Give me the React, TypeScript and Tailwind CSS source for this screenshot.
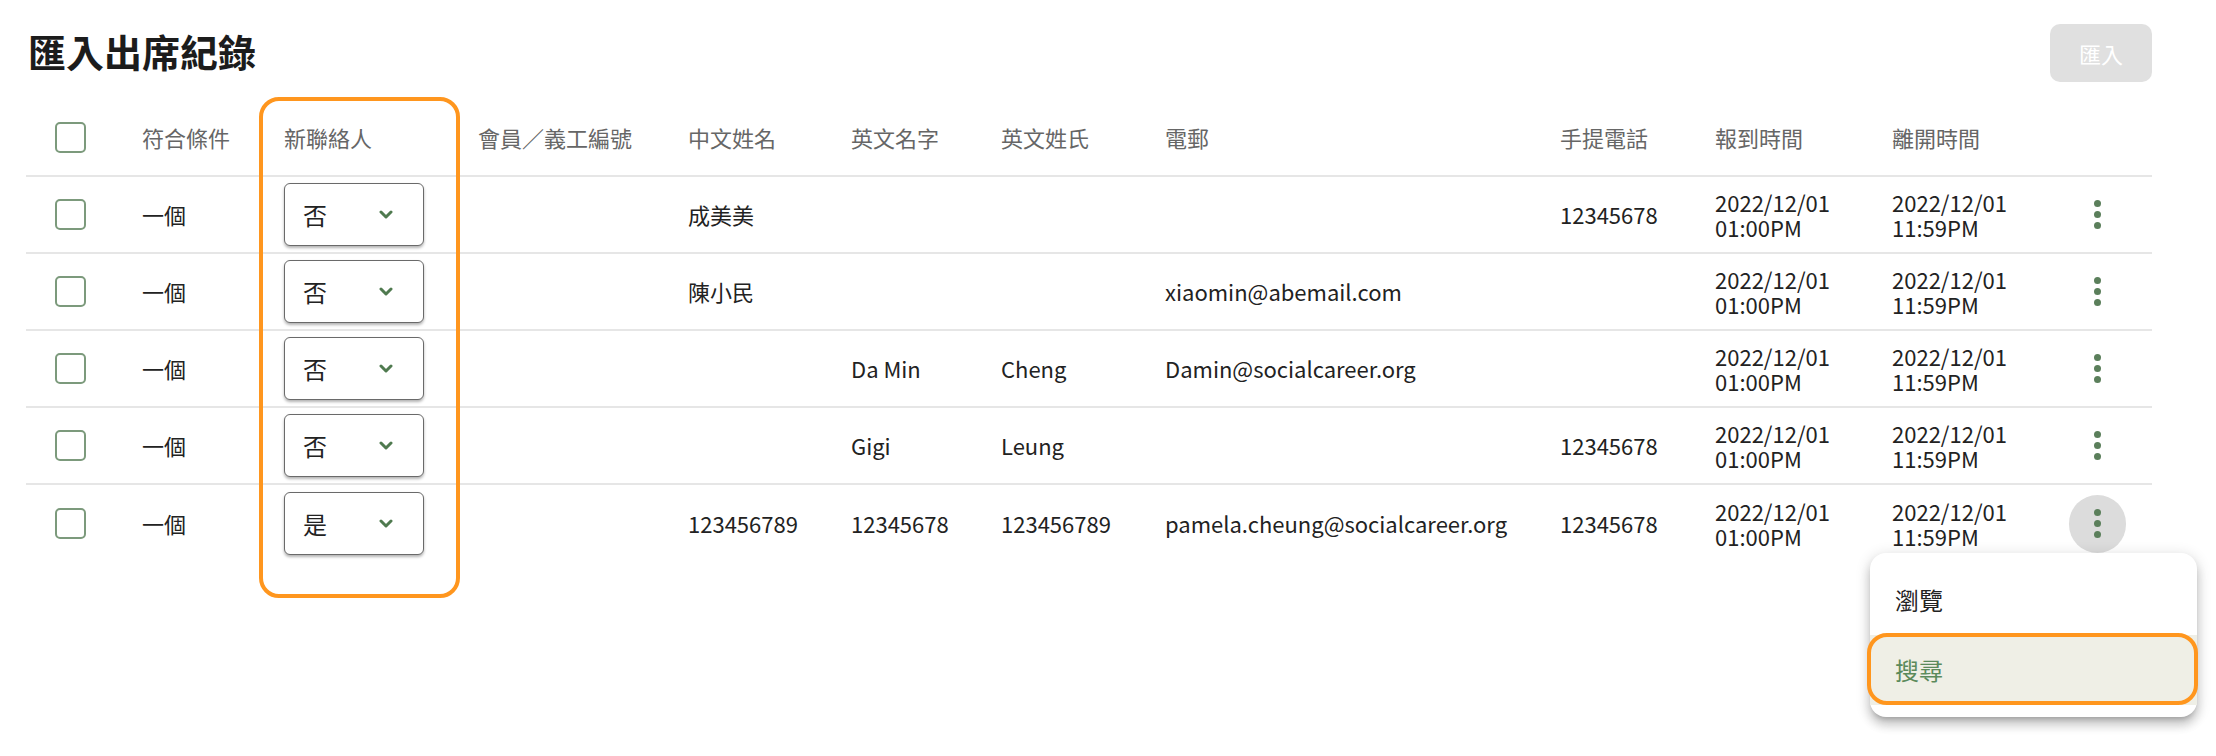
import React from 'react';

interface Row {
  qualify: string;
  isNew: string;
  memberNo: string;
  chineseName: string;
  firstName: string;
  lastName: string;
  email: string;
  mobile: string;
  checkIn: [string, string];
  checkOut: [string, string];
}

const rows: Row[] = [
  { qualify: '一個', isNew: '否', memberNo: '', chineseName: '成美美', firstName: '', lastName: '', email: '', mobile: '12345678', checkIn: ['2022/12/01', '01:00PM'], checkOut: ['2022/12/01', '11:59PM'] },
  { qualify: '一個', isNew: '否', memberNo: '', chineseName: '陳小民', firstName: '', lastName: '', email: 'xiaomin@abemail.com', mobile: '', checkIn: ['2022/12/01', '01:00PM'], checkOut: ['2022/12/01', '11:59PM'] },
  { qualify: '一個', isNew: '否', memberNo: '', chineseName: '', firstName: 'Da Min', lastName: 'Cheng', email: 'Damin@socialcareer.org', mobile: '', checkIn: ['2022/12/01', '01:00PM'], checkOut: ['2022/12/01', '11:59PM'] },
  { qualify: '一個', isNew: '否', memberNo: '', chineseName: '', firstName: 'Gigi', lastName: 'Leung', email: '', mobile: '12345678', checkIn: ['2022/12/01', '01:00PM'], checkOut: ['2022/12/01', '11:59PM'] },
  { qualify: '一個', isNew: '是', memberNo: '', chineseName: '123456789', firstName: '12345678', lastName: '123456789', email: 'pamela.cheung@socialcareer.org', mobile: '12345678', checkIn: ['2022/12/01', '01:00PM'], checkOut: ['2022/12/01', '11:59PM'] },
];

const headers = ['符合條件', '新聯絡人', '會員／義工編號', '中文姓名', '英文名字', '英文姓氏', '電郵', '手提電話', '報到時間', '離開時間'];

const gridCols =
  'grid grid-cols-[116px_142px_194px_210px_163px_150px_164px_395px_155px_177px_177px_1fr] items-center';

const Checkbox: React.FC = () => (
  <div className="ml-[29px] h-[31px] w-[31px] rounded-[5px] border-2 border-[#7c9a7c] bg-white" />
);

const Chevron: React.FC = () => (
  <svg width="14" height="9" viewBox="0 0 14 9" fill="none">
    <polyline points="2,2 7,7 12,2" stroke="#4f7a4f" strokeWidth="3" strokeLinecap="round" strokeLinejoin="round" />
  </svg>
);

const Kebab: React.FC<{ active?: boolean }> = ({ active }) => (
  <div
    className={`flex h-[58px] w-[57px] flex-col items-center justify-center gap-[4px] rounded-full ${
      active ? 'bg-[#dcdcdc]' : ''
    }`}
  >
    <span className="h-[7px] w-[7px] rounded-full bg-[#5b7f5b]" />
    <span className="h-[7px] w-[7px] rounded-full bg-[#5b7f5b]" />
    <span className="h-[7px] w-[7px] rounded-full bg-[#5b7f5b]" />
  </div>
);

const App: React.FC = () => {
  return (
    <div
      className="min-h-screen bg-white pl-[26px] pr-[64px] pt-[24px] text-[#222]"
      style={{ fontFamily: '"Noto Sans CJK TC", "Noto Sans", sans-serif' }}
    >
      {/* Title bar */}
      <div className="flex h-[58px] items-center justify-between">
        <h1 className="mb-[5px] pl-[2px] text-[38px] font-bold leading-none text-[#1c1c1c]">匯入出席紀錄</h1>
        <button className="h-[58px] w-[102px] rounded-[10px] bg-[#e0e0e0] text-[22px] text-white">匯入</button>
      </div>

      {/* Table */}
      <div className="relative mt-[18px]">
        {/* Header */}
        <div className={`${gridCols} h-[77px] border-b-2 border-[#e6e6e6] text-[22px] text-[#666]`}>
          <Checkbox />
          {headers.map((h) => (
            <div key={h}>{h}</div>
          ))}
          <div />
        </div>

        {rows.map((r, i) => (
          <div
            key={i}
            className={`${gridCols} h-[77px] text-[22px] ${i < rows.length - 1 ? 'border-b-2 border-[#e6e6e6]' : ''}`}
          >
            <Checkbox />
            <div>{r.qualify}</div>
            <div>
              <div className="flex h-[63px] w-[140px] items-center justify-between rounded-[6px] border border-[#6a6a6a] bg-white pl-[18px] pr-[30px] shadow-[0_2px_3px_rgba(0,0,0,0.3)]">
                <span className="text-[24px]">{r.isNew}</span>
                <Chevron />
              </div>
            </div>
            <div>{r.memberNo}</div>
            <div>{r.chineseName}</div>
            <div>{r.firstName}</div>
            <div>{r.lastName}</div>
            <div>{r.email}</div>
            <div>{r.mobile}</div>
            <div className="leading-[25px]">
              <div>{r.checkIn[0]}</div>
              <div>{r.checkIn[1]}</div>
            </div>
            <div className="leading-[25px]">
              <div>{r.checkOut[0]}</div>
              <div>{r.checkOut[1]}</div>
            </div>
            <div className="relative w-[57px]">
              <Kebab active={i === rows.length - 1} />
              {i === rows.length - 1 && (
                <div className="absolute left-[-199px] top-full z-10 w-[327px] rounded-[16px] bg-white py-[12px] shadow-[0_5px_5px_-3px_rgba(0,0,0,0.2),0_8px_10px_1px_rgba(0,0,0,0.14),0_3px_14px_2px_rgba(0,0,0,0.12)]">
                  <div className="flex h-[70px] items-center pl-[25px] text-[24px] text-[#222]">瀏覽</div>
                  <div className="relative flex h-[70px] items-center bg-[#efefe6] pl-[25px] text-[24px] text-[#5b8a5b]">
                    搜尋
                    <div className="absolute bottom-0 left-[-3px] right-[-1px] top-[-2px] rounded-[20px] border-4 border-[#ff961e]" />
                  </div>
                </div>
              )}
            </div>
          </div>
        ))}

        {/* Annotation around 新聯絡人 column */}
        <div className="pointer-events-none absolute left-[233px] top-[-3px] h-[501px] w-[201px] rounded-[20px] border-4 border-[#ff961e]" />
      </div>
    </div>
  );
};

export default App;
